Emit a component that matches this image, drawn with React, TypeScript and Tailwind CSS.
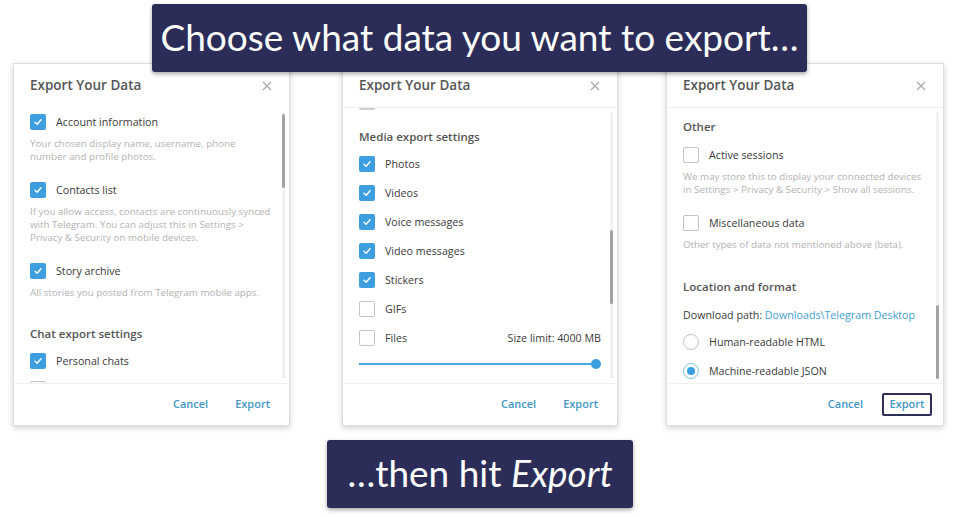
import React from 'react';

const Check: React.FC<{ on?: boolean }> = ({ on }) =>
  on ? (
    <span className="w-[16px] h-[16px] rounded-[2px] bg-[#3e9fe0] flex items-center justify-center shrink-0">
      <svg width="10" height="10" viewBox="0 0 10 10">
        <path d="M2 5.2 L4.2 7.2 L8 2.8" fill="none" stroke="#fff" strokeWidth="1.4" strokeLinecap="round" strokeLinejoin="round" />
      </svg>
    </span>
  ) : (
    <span className="w-[16px] h-[16px] rounded-[2px] border-[1.5px] border-[#c4c4c4] bg-white shrink-0" />
  );

const Radio: React.FC<{ on?: boolean }> = ({ on }) => (
  <span
    className={`w-[16px] h-[16px] rounded-full border-[1.5px] flex items-center justify-center shrink-0 ${
      on ? 'border-[#7fc0ea]' : 'border-[#c4c4c4]'
    }`}
  >
    {on && <span className="w-[8px] h-[8px] rounded-full bg-[#3e9fe0]" />}
  </span>
);

const Row: React.FC<{ label?: string; on?: boolean; radio?: boolean; className?: string; right?: string }> = ({
  label,
  on,
  radio,
  className = '',
  right,
}) => (
  <div className={`h-[22px] flex items-center gap-[10px] ${className}`}>
    {radio ? <Radio on={on} /> : <Check on={on} />}
    {label && <span className="text-[10.7px] text-[#3a3a3a]">{label}</span>}
    {right && <span className="ml-auto text-[10.7px] text-[#3a3a3a]">{right}</span>}
  </div>
);

const Desc: React.FC<{ children: React.ReactNode; className?: string }> = ({ children, className = '' }) => (
  <p className={`text-[9.8px] text-[#b3b3b3] leading-[13px] ${className}`}>{children}</p>
);

const Section: React.FC<{ children: React.ReactNode; className?: string }> = ({ children, className = '' }) => (
  <div className={`text-[11.5px] font-semibold text-[#555] leading-[16px] ${className}`}>{children}</div>
);

const Close = () => (
  <svg width="10" height="10" viewBox="0 0 10 10">
    <path d="M1 1 L9 9 M9 1 L1 9" stroke="#a8a8a8" strokeWidth="1.2" />
  </svg>
);

const Panel: React.FC<{
  width: string;
  className?: string;
  divider?: boolean;
  thumbTop: number;
  boxed?: boolean;
  children: React.ReactNode;
}> = ({ width, className = '', divider, thumbTop, boxed, children }) => (
  <div
    className={`${width} h-[363px] bg-white border border-[#dedede] shadow-[0_2px_6px_rgba(0,0,0,0.18)] flex flex-col ${className}`}
  >
    <div className={`h-[44px] flex items-center justify-between pl-[16px] pr-[17px] ${divider ? 'border-b border-[#efefef]' : ''}`}>
      <span className="text-[13.5px] font-semibold text-[#555] mt-[-1px]">Export Your Data</span>
      <Close />
    </div>
    <div className="flex-1 relative overflow-hidden px-[16px]">
      {children}
      <div className="absolute right-[4px] top-[4px] bottom-[4px] w-[3px] bg-[#f1f1f1] rounded" />
      <div className="absolute right-[4px] w-[3px] h-[74px] bg-[#a3a3a3] rounded" style={{ top: thumbTop }} />
    </div>
    <div className={`h-[42px] border-t border-[#f1f1f1] flex items-center justify-end text-[11px] font-semibold text-[#4196c6] ${boxed ? 'pr-[11px] gap-[19px]' : 'pr-[19px] gap-[27px]'}`}>
      <span>Cancel</span>
      {boxed ? (
        <span className="w-[50px] h-[23px] border-2 border-[#2c2e56] rounded-[2px] flex items-center justify-center">Export</span>
      ) : (
        <span>Export</span>
      )}
    </div>
  </div>
);

const Banner: React.FC<{ className?: string; children: React.ReactNode }> = ({ className = '', children }) => (
  <div
    className={`h-[68px] bg-[#2b2d58] rounded-[3px] shadow-[0_2px_4px_rgba(0,0,0,0.35)] flex items-center justify-center text-white text-[37px] relative z-10 ${className}`}
    style={{ fontFamily: 'Lato, "Noto Sans", sans-serif' }}
  >
    <span className="-mt-[2px]">{children}</span>
  </div>
);

export default function App() {
  return (
    <div className="w-[960px] h-[517px] bg-white flex flex-col items-center overflow-hidden" style={{ fontFamily: '"Open Sans", sans-serif' }}>
      <Banner className="mt-[4px] w-[655px] ml-[-1px]">Choose what data you want to export…</Banner>

      <div className="-mt-[9px] w-full flex items-start pl-[13px]">
        <Panel width="w-[277px]" thumbTop={6}>
          <Row className="mt-[3px]" label="Account information" on />
          <Desc className="mt-[4px]">
            Your chosen display name, username, phone
            <br />
            number and profile photos.
          </Desc>
          <Row className="mt-[16px]" label="Contacts list" on />
          <Desc className="mt-[4px] leading-[13.5px]">
            If you allow access, contacts are continuously synced
            <br />
            with Telegram. You can adjust this in Settings &gt;
            <br />
            Privacy &amp; Security on mobile devices.
          </Desc>
          <Row className="mt-[16px]" label="Story archive" on />
          <Desc className="mt-[4px]">All stories you posted from Telegram mobile apps.</Desc>
          <Section className="mt-[27px]">Chat export settings</Section>
          <Row className="mt-[8px]" label="Personal chats" on />
          <Row className="mt-[6px]" />
        </Panel>

        <Panel width="w-[276px]" className="ml-[52px]" divider thumbTop={122}>
          <div className="w-[16px] h-[2px] bg-[#d0d0d0] rounded-b" />
          <Section className="mt-[19px]">Media export settings</Section>
          <div className="mt-[8px] flex flex-col gap-[7px]">
            <Row label="Photos" on />
            <Row label="Videos" on />
            <Row label="Voice messages" on />
            <Row label="Video messages" on />
            <Row label="Stickers" on />
            <Row label="GIFs" />
            <Row label="Files" right="Size limit: 4000 MB" />
          </div>
          <div className="mt-[10px] h-[10px] relative flex items-center">
            <div className="w-[236px] h-[2px] bg-[#4aa6e0]" />
            <div className="w-[10px] h-[10px] rounded-full bg-[#3e9fe0] -ml-[4px]" />
          </div>
        </Panel>

        <Panel width="w-[278px]" className="ml-[48px]" divider thumbTop={197} boxed>
          <Section className="mt-[11px]">Other</Section>
          <Row className="mt-[9px]" label="Active sessions" />
          <Desc className="mt-[4px]">
            We may store this to display your connected devices
            <br />
            in Settings &gt; Privacy &amp; Security &gt; Show all sessions.
          </Desc>
          <Row className="mt-[16px]" label="Miscellaneous data" />
          <Desc className="mt-[4px]">Other types of data not mentioned above (beta).</Desc>
          <Section className="mt-[28px]">Location and format</Section>
          <div className="mt-[12px] leading-[16px] text-[10.7px] text-[#3a3a3a]">
            Download path: <span className="text-[#3f9ed6]">Downloads\Telegram Desktop</span>
          </div>
          <Row className="mt-[8px]" label="Human-readable HTML" radio />
          <Row className="mt-[7px]" label="Machine-readable JSON" radio on />
        </Panel>
      </div>

      <Banner className="mt-[14px] w-[306px]">
        …then hit <i>Export</i>
      </Banner>
    </div>
  );
}
